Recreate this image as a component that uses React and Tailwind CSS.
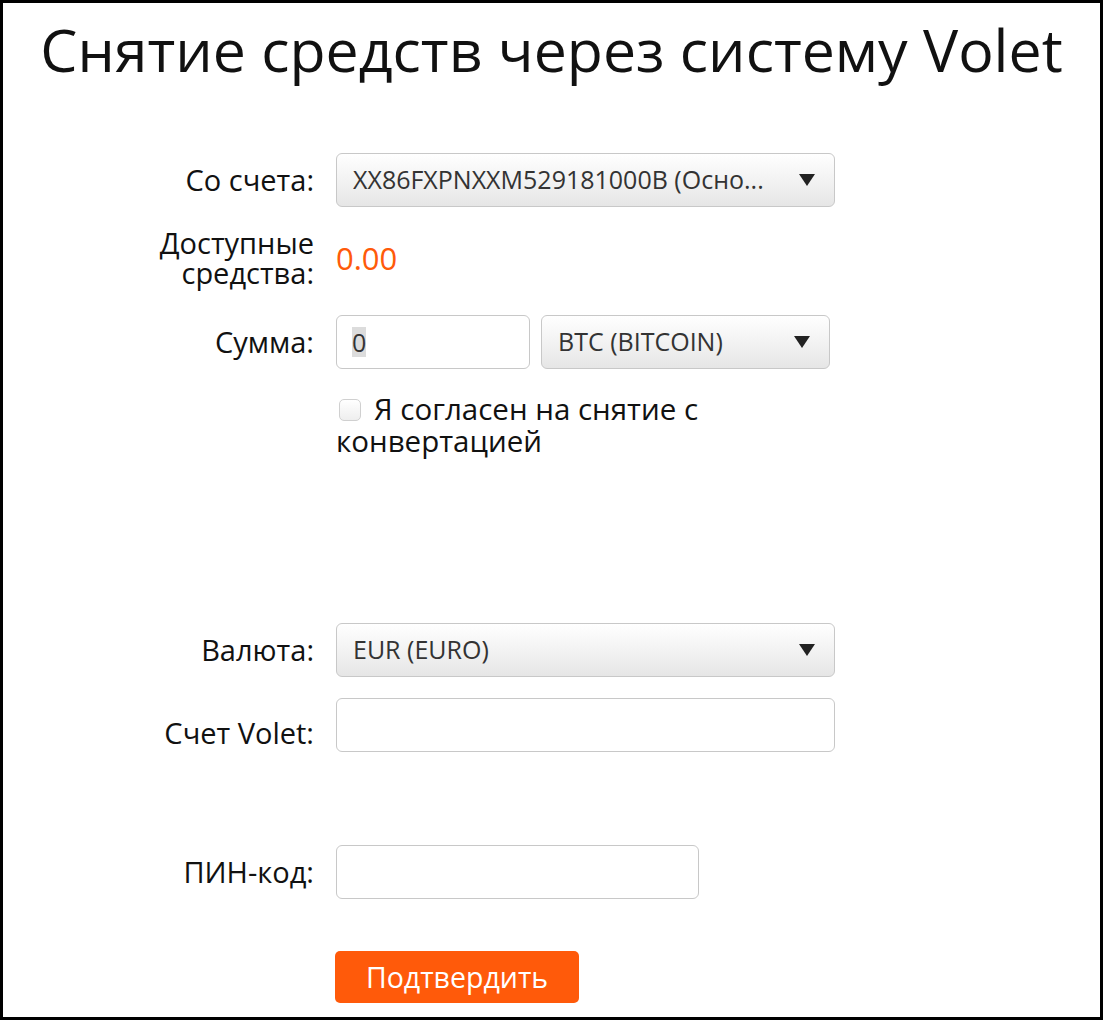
import { useState } from "react"

const Arrow = () => (
    <svg width="18" height="14" viewBox="0 0 18 14" className="shrink-0">
        <path d="M1 1h16L9 13z" fill="#222" />
    </svg>
)

const Select = ({ value, className = "" }) => (
    <div className={`h-[54px] flex items-center justify-between pl-[16px] pr-[18px] border border-[#c8c8c8] rounded-[6px] bg-gradient-to-b from-white to-[#e6e6e6] text-[25px] text-[#333] ${className}`}>
        <span className="truncate">{value}</span>
        <Arrow />
    </div>
)

const Row = ({ label, children, className = "", labelClass = "" }) => (
    <div className={`flex items-center ${className}`}>
        <div className={`w-[311px] text-right text-[29px] leading-[30px] text-[#111] ${labelClass}`}>{label}</div>
        <div className="ml-[22px] flex items-center">{children}</div>
    </div>
)

const App = () => {

    const [agree, setAgree] = useState(false)

    return (
        <main className="w-[1103px] h-[1020px] border-[3px] border-black bg-white overflow-hidden" style={{ fontFamily: "'Open Sans', sans-serif" }}>
            <h1 className="text-center text-[59px] leading-[64px] mt-[14px] text-[#111]">Снятие средств через систему Volet</h1>

            <Row label="Со счета:" className="mt-[72px]">
                <Select value="XX86FXPNXXM529181000B (Осно..." className="w-[499px]" />
            </Row>

            <Row label={<>Доступные<br />средства:</>} className="mt-[21px]">
                <span className="text-[31px] text-[#ff5a0a]">0.00</span>
            </Row>

            <Row label="Сумма:" className="mt-[27px]">
                <div className="w-[194px] h-[54px] flex items-center border border-[#c8c8c8] rounded-[6px] px-[15px] text-[25px] text-[#333] bg-white">
                    <span className="bg-[#dcdcdc] leading-[30px]">0</span>
                </div>
                <Select value="BTC (BITCOIN)" className="w-[289px] ml-[11px]" />
            </Row>

            <div className="ml-[333px] mt-[24px] w-[400px] text-[29.5px] leading-[32px] text-[#111]">
                <label className="cursor-pointer">
                    <span
                        className={`inline-block align-[-1px] w-[22px] h-[22px] ml-[3px] mr-[13px] border border-[#d0d0d0] rounded-[5px] ${agree ? "bg-[#ff5a0a]" : "bg-gradient-to-b from-white to-[#eee]"}`}
                        onClick={() => setAgree(!agree)}></span>
                    Я согласен на снятие с конвертацией
                </label>
            </div>

            <Row label="Валюта:" className="mt-[166px]">
                <Select value="EUR (EURO)" className="w-[499px]" />
            </Row>

            <Row label="Счет Volet:" className="mt-[21px]" labelClass="pt-[15px]">
                <input className="w-[499px] h-[54px] border border-[#c8c8c8] rounded-[6px] px-[15px] text-[25px] outline-none" />
            </Row>

            <Row label="ПИН-код:" className="mt-[93px]">
                <input type="password" className="w-[363px] h-[54px] border border-[#c8c8c8] rounded-[6px] px-[15px] text-[25px] outline-none" />
            </Row>

            <div className="ml-[332px] mt-[52px]">
                <button className="w-[244px] h-[52px] bg-[#ff5a0a] rounded-[5px] text-white text-[28.5px]">Подтвердить</button>
            </div>
        </main>
    )
}

export default App
